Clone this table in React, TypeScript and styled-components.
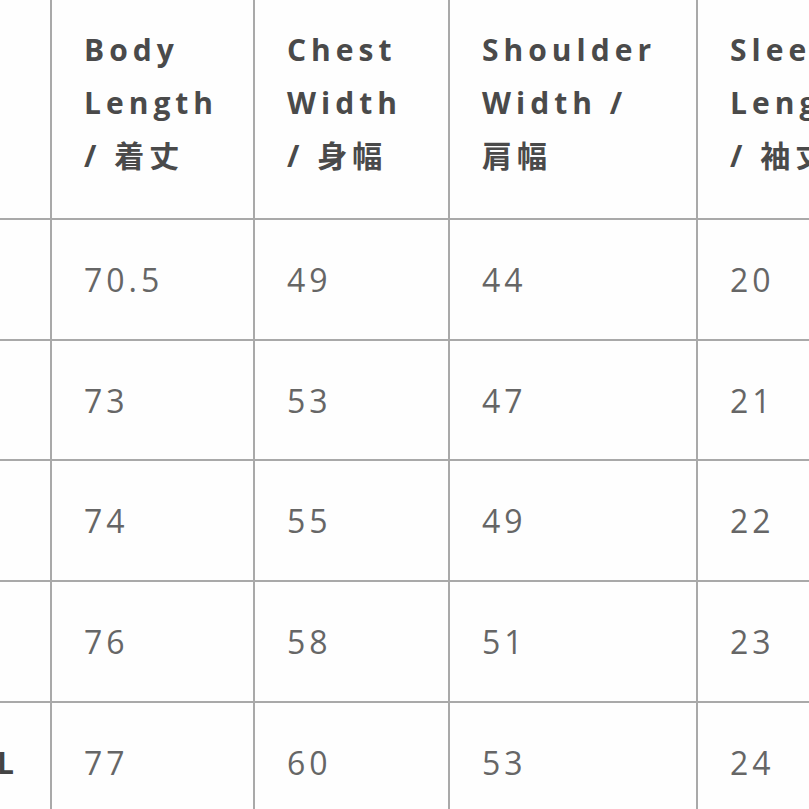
import React from "react";
import styled, { createGlobalStyle } from "styled-components";

const Global = createGlobalStyle`
  html, body { margin: 0; padding: 0; background: #ffffff; }
  body { font-family: "Open Sans", "Noto Sans CJK JP", sans-serif; }
`;

const Frame = styled.div`
  width: 809px;
  height: 809px;
  overflow: hidden;
  background: #fefefe;
`;

const Chart = styled.div`
  display: grid;
  grid-template-columns: 137px 203px 195px 248px 260px;
  grid-template-rows: 220px 121px 120px 121px 121px 121px;
  margin-left: -85px;
  width: max-content;
`;

const Cell = styled.div<{ $head?: boolean }>`
  box-sizing: border-box;
  border-right: 2px solid #a9a9a9;
  border-bottom: 2px solid #a9a9a9;
  padding-left: 32px;
  display: flex;
  flex-direction: column;
  justify-content: ${(p) => (p.$head ? "flex-start" : "center")};
  padding-top: ${(p) => (p.$head ? "23px" : "0")};
`;

const HeadText = styled.div`
  font-family: "Open Sans", "Noto Sans CJK JP", sans-serif;
  font-weight: 700;
  font-size: 30px;
  line-height: 53px;
  letter-spacing: 5px;
  color: #4a4a4a;
  white-space: pre-line;
`;

const SizeLabel = styled.div`
  font-family: "Open Sans", "Noto Sans CJK JP", sans-serif;
  font-weight: 700;
  font-size: 30px;
  letter-spacing: 5px;
  color: #444444;
`;

const Value = styled.div`
  font-family: "Open Sans", sans-serif;
  font-weight: 400;
  font-size: 32px;
  letter-spacing: 4px;
  color: #666666;
`;

const headers = [
  "",
  "Body\nLength\n/ 着丈",
  "Chest\nWidth\n/ 身幅",
  "Shoulder\nWidth /\n肩幅",
  "Sleeve\nLength\n/ 袖丈",
];

const rows: [string, string, string, string, string][] = [
  ["S", "70.5", "49", "44", "20"],
  ["M", "73", "53", "47", "21"],
  ["L", "74", "55", "49", "22"],
  ["XL", "76", "58", "51", "23"],
  ["XXL", "77", "60", "53", "24"],
];

export default function App() {
  return (
    <>
      <Global />
      <Frame>
        <Chart>
          {headers.map((h, i) => (
            <Cell $head key={`h${i}`}>
              <HeadText>{h}</HeadText>
            </Cell>
          ))}
          {rows.map((r, ri) =>
            r.map((v, ci) => (
              <Cell key={`${ri}-${ci}`}>
                {ci === 0 ? <SizeLabel>{v}</SizeLabel> : <Value>{v}</Value>}
              </Cell>
            ))
          )}
        </Chart>
      </Frame>
    </>
  );
}
